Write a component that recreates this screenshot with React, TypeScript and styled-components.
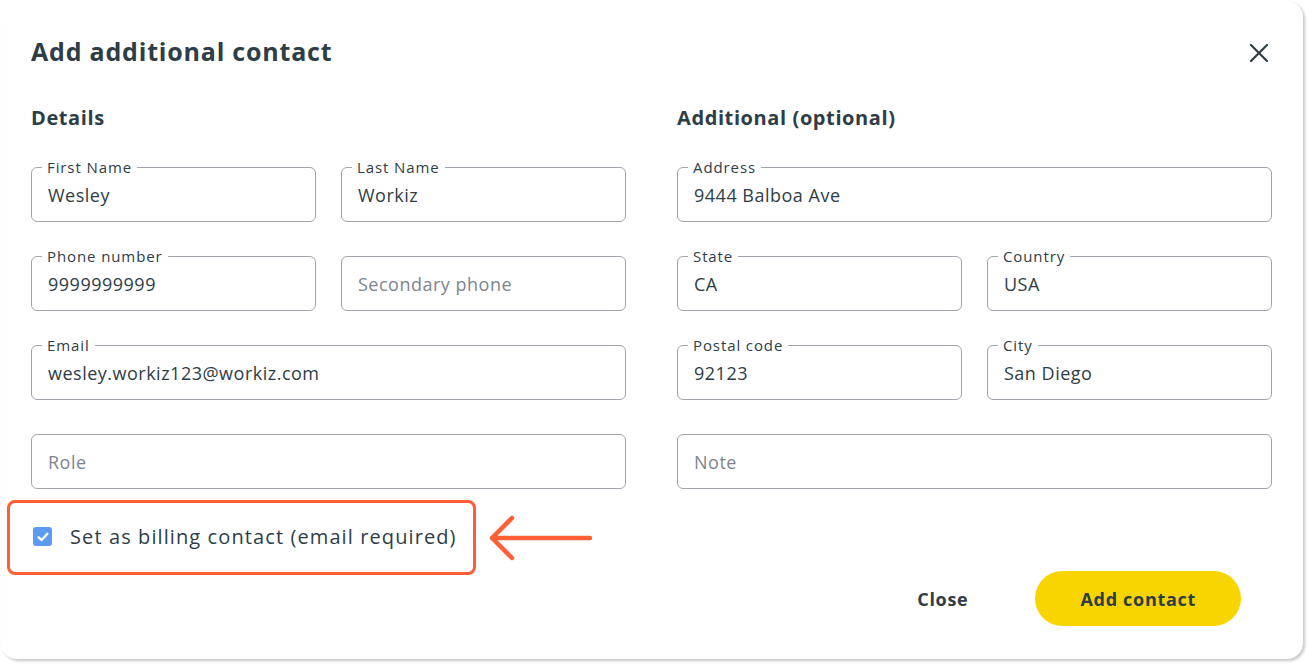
import styled, { createGlobalStyle } from 'styled-components';

const GlobalStyle = createGlobalStyle`
  html, body {
    margin: 0;
    padding: 0;
    background: #ffffff;
  }
  * {
    box-sizing: border-box;
  }
`;

const COLORS = {
  text: '#2e3d46',
  border: '#a0a6ab',
  placeholder: '#7d858b',
  yellow: '#f9d500',
  blue: '#5c9cf0',
  annotation: '#ff5f36',
};

const Page = styled.div`
  width: 1307px;
  height: 664px;
  padding: 1px 0 0 1px;
  font-family: 'Open Sans', 'Liberation Sans', sans-serif;
  color: ${COLORS.text};
`;

const Card = styled.div`
  position: relative;
  width: 1302px;
  height: 658px;
  background: #ffffff;
  border-radius: 16px;
  box-shadow: 2px 2px 3px rgba(0, 0, 0, 0.22);
  padding: 33px 30px 0 30px;
  display: flex;
  flex-direction: column;
`;

const Header = styled.div`
  display: flex;
  align-items: center;
  justify-content: space-between;
  height: 34px;
`;

const Title = styled.h1`
  margin: 0;
  font-size: 25px;
  font-weight: 700;
  letter-spacing: 0.8px;
`;

const CloseIcon = styled.button`
  border: none;
  background: none;
  padding: 0;
  width: 20px;
  height: 20px;
  margin-right: 4px;
  margin-top: 4px;
  color: ${COLORS.text};
  display: flex;
`;

const Columns = styled.div`
  display: grid;
  grid-template-columns: 595px 595px;
  column-gap: 51px;
  margin-top: 38px;
`;

const Section = styled.div`
  display: flex;
  flex-direction: column;
`;

const SectionTitle = styled.h2`
  margin: 0 0 37px 0;
  font-size: 20px;
  font-weight: 700;
  line-height: 24px;
  letter-spacing: 0.6px;
`;

const FieldGrid = styled.div`
  display: grid;
  grid-template-columns: 1fr 1fr;
  column-gap: 25px;
  row-gap: 34px;
`;

const Field = styled.div<{ $wide?: boolean }>`
  position: relative;
  grid-column: ${(p) => (p.$wide ? '1 / span 2' : 'auto')};
  height: 55px;
  border: 1px solid ${COLORS.border};
  border-radius: 6px;
  display: flex;
  align-items: center;
  padding: 0 16px;
`;

const FieldLabel = styled.span`
  position: absolute;
  top: -11px;
  left: 10px;
  padding: 0 5px;
  background: #ffffff;
  font-size: 15px;
  line-height: 20px;
  letter-spacing: 0.9px;
  color: ${COLORS.text};
`;

const FieldValue = styled.span<{ $placeholder?: boolean }>`
  font-size: 18px;
  letter-spacing: 0.5px;
  color: ${(p) => (p.$placeholder ? COLORS.placeholder : COLORS.text)};
`;

const CheckRow = styled.label`
  display: flex;
  align-items: center;
  gap: 18px;
  margin-top: 34px;
  padding-left: 2px;
  font-size: 20px;
  letter-spacing: 1.1px;
`;

const CheckBox = styled.span`
  width: 19px;
  height: 19px;
  border-radius: 3px;
  background: ${COLORS.blue};
  display: flex;
  align-items: center;
  justify-content: center;
`;

const Footer = styled.div`
  display: flex;
  justify-content: flex-end;
  align-items: center;
  gap: 34px;
  margin-top: 21px;
  padding-right: 32px;
`;

const Button = styled.button<{ $primary?: boolean }>`
  font-family: inherit;
  font-size: 18px;
  font-weight: 700;
  letter-spacing: 0.7px;
  color: ${COLORS.text};
  border: none;
  height: 55px;
  border-radius: 28px;
  padding: 0 ${(p) => (p.$primary ? '45px' : '33px')};
  min-width: ${(p) => (p.$primary ? '205px' : '0')};
  background: ${(p) => (p.$primary ? COLORS.yellow : 'transparent')};
  cursor: pointer;
`;

const Highlight = styled.div`
  position: absolute;
  left: 6px;
  top: 499px;
  width: 469px;
  height: 75px;
  border: 3px solid ${COLORS.annotation};
  border-radius: 8px;
  pointer-events: none;
`;

const Arrow = styled.svg`
  position: absolute;
  left: 487px;
  top: 513px;
  pointer-events: none;
`;

type FieldDef = {
  label?: string;
  value: string;
  wide?: boolean;
};

const details: FieldDef[] = [
  { label: 'First Name', value: 'Wesley' },
  { label: 'Last Name', value: 'Workiz' },
  { label: 'Phone number', value: '9999999999' },
  { value: 'Secondary phone' },
  { label: 'Email', value: 'wesley.workiz123@workiz.com', wide: true },
  { value: 'Role', wide: true },
];

const additional: FieldDef[] = [
  { label: 'Address', value: '9444 Balboa Ave', wide: true },
  { label: 'State', value: 'CA' },
  { label: 'Country', value: 'USA' },
  { label: 'Postal code', value: '92123' },
  { label: 'City', value: 'San Diego' },
  { value: 'Note', wide: true },
];

const renderFields = (fields: FieldDef[]) =>
  fields.map((f, i) => (
    <Field key={i} $wide={f.wide}>
      {f.label && <FieldLabel>{f.label}</FieldLabel>}
      <FieldValue $placeholder={!f.label}>{f.value}</FieldValue>
    </Field>
  ));

const App = () => {
  return (
    <Page>
      <GlobalStyle />
      <Card>
        <Header>
          <Title>Add additional contact</Title>
          <CloseIcon aria-label="close">
            <svg width="20" height="20" viewBox="0 0 20 20">
              <path d="M2 2 L18 18 M18 2 L2 18" stroke="currentColor" strokeWidth="2.2" strokeLinecap="round" />
            </svg>
          </CloseIcon>
        </Header>
        <Columns>
          <Section>
            <SectionTitle>Details</SectionTitle>
            <FieldGrid>{renderFields(details)}</FieldGrid>
            <CheckRow>
              <CheckBox>
                <svg width="14" height="14" viewBox="0 0 14 14">
                  <path d="M2.6 7.4 L5.6 10 L11.4 3.8" stroke="#fff" strokeWidth="2.4" fill="none" strokeLinecap="round" strokeLinejoin="round" />
                </svg>
              </CheckBox>
              Set as billing contact (email required)
            </CheckRow>
          </Section>
          <Section>
            <SectionTitle>Additional (optional)</SectionTitle>
            <FieldGrid>{renderFields(additional)}</FieldGrid>
          </Section>
        </Columns>
        <Footer>
          <Button>Close</Button>
          <Button $primary>Add contact</Button>
        </Footer>
        <Highlight />
        <Arrow width="106" height="48" viewBox="0 0 106 48">
          <path d="M4 24 H102 M24 4 L4 24 L24 44" stroke="#ff5f36" strokeWidth="4.5" fill="none" strokeLinecap="round" strokeLinejoin="round" />
        </Arrow>
      </Card>
    </Page>
  );
};

export default App;
